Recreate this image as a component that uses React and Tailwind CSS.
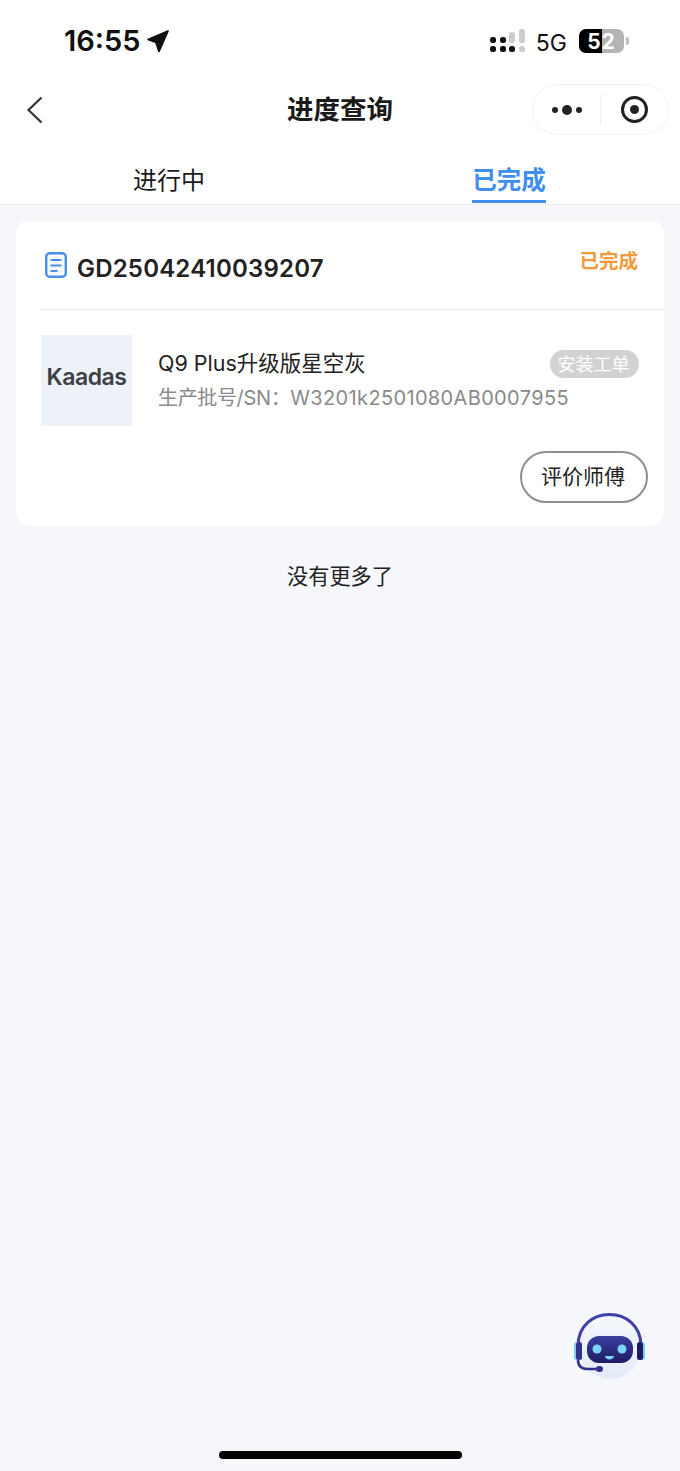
import React from 'react';

const cjk = '"Inter", "Noto Sans CJK SC", sans-serif';

const SignalIcon = () => (
  <svg width="35" height="26" viewBox="0 0 35 26">
    <rect x="0" y="8" width="6" height="6" rx="2.5" fill="#111" />
    <rect x="0" y="17" width="6" height="6" rx="2.5" fill="#111" />
    <rect x="10" y="8" width="6" height="6" rx="2.5" fill="#111" />
    <rect x="10" y="17" width="6" height="6" rx="2.5" fill="#111" />
    <rect x="19" y="17" width="6" height="6" rx="2.5" fill="#111" />
    <rect x="19" y="3" width="6" height="11" rx="2.5" fill="#ccc" />
    <rect x="29" y="17" width="6" height="6" rx="2.5" fill="#ccc" />
    <rect x="29" y="0" width="6" height="14" rx="2.5" fill="#ccc" />
  </svg>
);

const Battery = () => (
  <div className="mt-[-2px] flex items-center gap-[2px]">
    <div className="relative flex h-[24px] w-[45px] overflow-hidden rounded-[7px] bg-[#b4b4b4]">
      <div className="h-full w-[23px] bg-black" />
      <span className="absolute inset-0 flex items-center justify-center text-[21px] font-bold leading-none tracking-[1px] text-white">52</span>
    </div>
    <div className="h-[8px] w-[3px] rounded-r-full bg-[#bdbdbd]" />
  </div>
);

const StatusBar = () => (
  <div className="flex h-[76px] items-start justify-between bg-white pt-[25px]">
    <div className="ml-[64px] flex items-center gap-[5px]">
      <span className="text-[29px] font-semibold leading-[32px] text-[#111]">16:55</span>
      <svg width="24" height="26" viewBox="0 0 24 26" className="mt-[-1px]">
        <path d="M22 3 L2 11.5 L10 14.5 L13 23.5 Z" fill="#111" stroke="#111" strokeWidth="1.8" strokeLinejoin="round" />
      </svg>
    </div>
    <div className="mr-[51px] flex items-center">
      <SignalIcon />
      <span className="ml-[11px] mr-[12px] mt-[2px] text-[23px] leading-[32px] text-[#111]">5G</span>
      <Battery />
    </div>
  </div>
);

const NavBar = () => (
  <div className="relative flex h-[68px] items-center justify-center bg-white">
    <svg width="20" height="30" viewBox="0 0 20 30" className="absolute left-[25px] top-[19px]">
      <path d="M16.5 2.5 L3.5 15 L16.5 27.5" fill="none" stroke="#333" strokeWidth="2.2" />
    </svg>
    <span className="text-[26.5px] font-semibold text-[#1a1a1a]">进度查询</span>
    <div className="absolute left-[532px] top-[8px] flex h-[51px] w-[137px] items-center rounded-full border border-[#f2f2f2]">
      <div className="flex w-[67px] items-center justify-center gap-[4px]">
        <div className="h-[6px] w-[6px] rounded-full bg-[#222]" />
        <div className="h-[10px] w-[10px] rounded-full bg-[#222]" />
        <div className="h-[6px] w-[6px] rounded-full bg-[#222]" />
      </div>
      <div className="h-[31px] w-px bg-[#f0f0f0]" />
      <div className="flex flex-1 items-center justify-center">
        <div className="flex h-[27px] w-[27px] items-center justify-center rounded-full border-[3px] border-[#222]">
          <div className="h-[9px] w-[9px] rounded-full bg-[#222]" />
        </div>
      </div>
    </div>
  </div>
);

const Tabs = () => (
  <div className="flex h-[61px] border-b border-[#ececec] bg-white">
    <div className="flex flex-1 justify-center pr-[2px]">
      <div className="pt-[21px] text-[24px] leading-[32px] text-[#1a1a1a]">进行中</div>
    </div>
    <div className="flex flex-1 justify-center pr-[2px]">
      <div className="h-[59px] border-b-[3px] border-[#3f8ef0] pt-[20px] text-[24.5px] font-semibold leading-[32px] text-[#3f8ef0]">已完成</div>
    </div>
  </div>
);

const DocIcon = () => (
  <svg width="22" height="26" viewBox="0 0 22 26">
    <rect x="1.2" y="1.2" width="19.6" height="23.6" rx="3.5" fill="#f4f8fe" stroke="#4a90e6" strokeWidth="2.4" />
    <path d="M5.5 8 H16.5 M5.5 13.5 H16.5 M5.5 19 H12.5" stroke="#4a90e6" strokeWidth="2.2" fill="none" />
  </svg>
);

const OrderCard = () => (
  <div className="mx-[16px] mt-[16px] h-[305px] rounded-[14px] bg-white">
    <div className="ml-[24px] flex h-[89px] justify-between border-b border-[#ededed] pr-[26px]">
      <div className="flex items-center pt-[2px]">
        <div className="ml-[5px] mt-[-3px] flex"><DocIcon /></div>
        <span className="ml-[10px] mt-[6px] text-[24px] font-semibold tracking-[0.2px] text-[#222]">GD25042410039207</span>
      </div>
      <span className="pt-[25px] text-[19.5px] font-semibold leading-[30px] text-[#f59a3c]">已完成</span>
    </div>

    <div className="relative ml-[25px] mt-[25px] flex">
      <div className="flex h-[91px] w-[91px] items-center justify-center bg-[#edf1f8] pb-[6px]">
        <span className="text-[23px] font-semibold tracking-[-0.5px] text-[#3c3f45]">Kaadas</span>
      </div>
      <div className="ml-[26px] pt-[12px]">
        <div className="text-[21.5px] leading-[32px] text-[#222]">Q9 Plus升级版星空灰</div>
        <div className="mt-[3px] text-[20px] leading-[32px] text-[#8a8a8a]">
          <span className="tracking-[-0.35px]">生产批号/SN：</span>
          <span className="tracking-[0.35px]">W3201k2501080AB0007955</span>
        </div>
      </div>
      <span className="absolute right-[25px] top-[15px] flex h-[28px] w-[89px] items-center justify-center rounded-full bg-[#d2d2d2] pr-[2px] text-[18px] text-white">安装工单</span>
    </div>

    <div className="mt-[25px] flex justify-end pr-[16px]">
      <button className="flex h-[52px] w-[128px] items-center justify-center rounded-full border-2 border-[#8f8f8f] bg-white pr-[2px] text-[21px] text-[#222]">评价师傅</button>
    </div>
  </div>
);

const RobotIcon = () => (
  <svg width="80" height="72" viewBox="0 0 80 72">
    <defs>
      <linearGradient id="face" x1="0" y1="0" x2="0" y2="1">
        <stop offset="0" stopColor="#3b3f9f" />
        <stop offset="1" stopColor="#1d1c62" />
      </linearGradient>
      <linearGradient id="halo" x1="0" y1="0" x2="0" y2="1">
        <stop offset="0" stopColor="#f5f7fb" />
        <stop offset="1" stopColor="#e4eaf8" />
      </linearGradient>
    </defs>
    <circle cx="39.5" cy="37" r="32" fill="url(#halo)" />
    <path d="M8 36 C8 -6 71 -6 71 36" fill="none" stroke="#3f3fa8" strokeWidth="3" />
    <rect x="4" y="32" width="6" height="18" rx="3" fill="#7cd0f8" />
    <rect x="69" y="32" width="6" height="18" rx="3" fill="#7cd0f8" />
    <rect x="6" y="32" width="6" height="18" rx="2.5" fill="#33338f" />
    <rect x="67" y="32" width="6" height="18" rx="2.5" fill="#1d1c62" />
    <rect x="17" y="26" width="46" height="27" rx="12" fill="url(#face)" />
    <circle cx="27" cy="39" r="4.5" fill="#7ed4f8" />
    <circle cx="52" cy="39" r="4.5" fill="#7ed4f8" />
    <path d="M35 46 H44 C44 50.5 35 50.5 35 46 Z" fill="#7ed4f8" />
    <path d="M8 50 C8 57 12 59 18 59 H30" fill="none" stroke="#33338f" strokeWidth="2.6" />
    <rect x="26" y="56" width="7" height="6" rx="3" fill="#33338f" />
  </svg>
);

const App = () => {
  return (
    <div className="relative flex h-[1471px] w-[680px] flex-col overflow-hidden bg-[#f5f7fb]" style={{ fontFamily: cjk }}>
      <StatusBar />
      <NavBar />
      <Tabs />
      <OrderCard />
      <div className="mt-[35px] text-center text-[21.2px] leading-[30px] text-[#222]">没有更多了</div>

      {/* floating helper + home bar */}
      <div className="absolute left-[570px] top-[1310px]">
        <RobotIcon />
      </div>
      <div className="absolute bottom-[12px] left-[219px] h-[8px] w-[243px] rounded-full bg-black" />
    </div>
  );
};

export default App;
